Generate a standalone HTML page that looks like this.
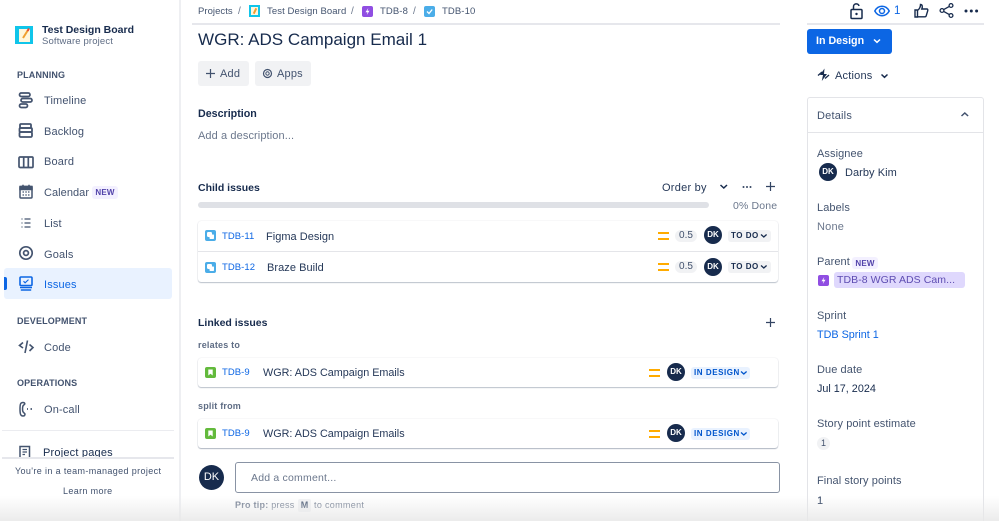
<!DOCTYPE html>
<html><head><meta charset="utf-8"><style>
html,body{margin:0;padding:0;background:#fff}
#p{position:relative;width:999px;height:521px;overflow:hidden;background:#fff;font-family:"Liberation Sans",sans-serif;color:#172B4D;font-size:11px}
.t{position:absolute;line-height:16px;white-space:nowrap}
.a{position:absolute}
.nav{color:#42526E;font-size:11px;letter-spacing:.15px}
.sec{color:#42526E;font-size:9px;font-weight:bold;letter-spacing:.15px}
.lnk{color:#0C66E4;font-size:9.5px;letter-spacing:.05px}
.dk{position:absolute;border-radius:50%;background:#172B4D;color:#fff;font-size:8px;font-weight:bold;text-align:center}
.row{position:absolute;left:198px;width:580px;background:#fff;border-radius:3px}
.ico{position:absolute;width:11px;height:11px;border-radius:2px}
.pri{position:absolute;width:11px;height:8px;border-top:2px solid #FFAB00;border-bottom:2px solid #FFAB00;box-sizing:border-box}
.st{position:absolute;height:12px;line-height:12px;border-radius:3px;font-size:8px;font-weight:bold;letter-spacing:.5px;padding-left:3px;box-sizing:border-box}
.lab{color:#44546F;font-size:11px;letter-spacing:.08px}
svg{position:absolute;overflow:visible}
</style></head><body><div id="p">

<!-- sidebar divider -->
<div class="a" style="left:179px;top:0;width:2px;height:521px;background:#EEEFF2"></div>

<!-- project logo -->
<div class="a" style="left:15px;top:26px;width:18px;height:18px;background:#10C5EA"></div>
<div class="a" style="left:19px;top:29px;width:11px;height:13px;background:#FFF6DC"></div>
<svg style="left:15px;top:26px" width="18" height="18"><path d="M8 12 L13 4" stroke="#F0A030" stroke-width="2"/><path d="M12.5 5 L14 2.5" stroke="#E5493A" stroke-width="2"/></svg>
<div class="t" style="left:42px;top:22px;font-size:10.5px;font-weight:bold;letter-spacing:0;">Test Design Board</div>
<div class="t" style="left:42px;top:34px;font-size:9.5px;color:#5E6C84;letter-spacing:.15px">Software project</div>

<div class="t sec" style="left:17px;top:67px">PLANNING</div>

<svg style="left:18px;top:92px" width="16" height="18" fill="none" stroke="#44546F" stroke-width="1.7"><rect x="1.5" y="1" width="10.5" height="3.5" rx="1.7"/><rect x="3" y="6.5" width="11" height="3.5" rx="1.7"/><rect x="1.5" y="12" width="8" height="3.5" rx="1.7"/></svg>
<div class="t nav" style="left:44px;top:93px">Timeline</div>

<svg style="left:18px;top:123px" width="16" height="16" fill="none" stroke="#44546F" stroke-width="1.8"><rect x="2" y="1" width="11" height="4" rx="1"/><rect x="1.5" y="5" width="12.5" height="4" rx="1"/><rect x="1.5" y="9" width="12.5" height="5" rx="1.2"/></svg>
<div class="t nav" style="left:44px;top:124px">Backlog</div>

<svg style="left:18px;top:155px" width="16" height="14" fill="none" stroke="#44546F" stroke-width="1.7"><rect x="1" y="2" width="14" height="10.5" rx="1"/><path d="M5.7 2v10.5M10.3 2v10.5"/></svg>
<div class="t nav" style="left:44px;top:154px">Board</div>

<svg style="left:18px;top:184px" width="16" height="16" fill="none" stroke="#44546F" stroke-width="1.5"><rect x="2" y="2.5" width="12" height="11.5" rx="1"/><rect x="2" y="2.5" width="12" height="3" fill="#44546F"/><path d="M5 .8v2M11 .8v2" /><path d="M4.5 8h1.5M7.3 8h1.5M10 8h1.5M4.5 11h1.5M7.3 11h1.5M10 11h1.5" stroke-width="1.2"/></svg>
<div class="t nav" style="left:44px;top:185px;letter-spacing:.05px">Calendar</div>
<div class="a" style="left:92px;top:186px;width:26px;height:13px;background:#F3F0FF;border-radius:3px;color:#5243AA;font-size:8px;font-weight:bold;line-height:13px;text-align:center;letter-spacing:.2px">NEW</div>

<svg style="left:20px;top:217px" width="12" height="12" fill="none" stroke="#44546F" stroke-width="1.3"><path d="M1.5 2h1M1.5 6h1M1.5 10h1M4.5 2h6M4.5 6h6M4.5 10h6"/></svg>
<div class="t nav" style="left:44px;top:216px">List</div>

<svg style="left:18px;top:245px" width="16" height="16" fill="none" stroke="#44546F"><circle cx="8" cy="8" r="6.2" stroke-width="1.7"/><circle cx="8" cy="8" r="2.4" stroke-width="1.7"/></svg>
<div class="t nav" style="left:44px;top:247px">Goals</div>

<div class="a" style="left:4px;top:268px;width:168px;height:31px;background:#E9F2FF;border-radius:3px"></div>
<div class="a" style="left:4px;top:277px;width:3px;height:13px;background:#0C66E4;border-radius:0 2px 2px 0"></div>
<svg style="left:18px;top:276px" width="16" height="16" fill="none" stroke="#0C66E4" stroke-width="1.6"><rect x="2" y="1" width="12" height="8.5" rx="1"/><path d="M5.5 5.2l1.6 1.6L10.5 3.6" stroke-width="1.1"/><path d="M2 11.5h12M2.8 14h10.4"/></svg>
<div class="t nav" style="left:44px;top:277px;color:#0C66E4">Issues</div>

<div class="t sec" style="left:17px;top:313px">DEVELOPMENT</div>
<svg style="left:18px;top:339px" width="16" height="16" fill="none" stroke="#44546F" stroke-width="1.6"><path d="M5 3.5L1.5 6.5 5 9M11.5 5.5L15 8.5 11.5 12M9.5 1.5L7 14"/></svg>
<div class="t nav" style="left:44px;top:340px">Code</div>

<div class="t sec" style="left:17px;top:375px">OPERATIONS</div>
<svg style="left:18px;top:400px" width="16" height="18" fill="none" stroke="#44546F" stroke-width="1.5"><path d="M5 2.500c-2.500 0-3 1.500-3 6.500s.5 7 3 7c1.500 0 2-.7 2-2l-2-2.200c-.6-1-.6-4.500 0-6L6.800 4C6.800 3 6 2.500 5 2.500z"/><path d="M9 9h1M12.500 9h1.500" stroke-width="1.700"/></svg>
<div class="t nav" style="left:44px;top:402px">On-call</div>

<div class="a" style="left:2px;top:430px;width:172px;height:1px;background:#EBECF0"></div>
<div class="t nav" style="left:43px;top:445px;color:#172B4D;letter-spacing:.2px">Project pages</div>
<div class="a" style="left:0;top:457px;width:179px;height:64px;background:#fff"></div>
<svg style="left:18px;top:445px" width="14" height="12" fill="none" stroke="#44546F" stroke-width="1.500" ><path d="M2 12V1.500h9.500V12"/><path d="M4.500 4.500h4.500M4.500 7h4.500M4.500 9.500h2.500" stroke-width="1.200"/></svg>
<div class="a" style="left:2px;top:457px;width:172px;height:2px;background:#E6E7EC"></div>
<div class="t" style="left:15px;top:463px;font-size:9px;color:#42526E;letter-spacing:.37px">You're in a team-managed project</div>
<div class="t" style="left:63px;top:483px;font-size:9px;color:#42526E;letter-spacing:.35px">Learn more</div>

<!-- breadcrumb -->
<div class="t" style="left:198px;top:4px;font-size:9.5px;color:#44546F;letter-spacing:.05px">Projects</div>
<div class="t" style="left:238px;top:4px;font-size:10px;color:#6B778C">/</div>
<div class="a" style="left:249px;top:5px;width:11px;height:12px;background:#10C5EA"></div>
<div class="a" style="left:251px;top:7px;width:7px;height:8px;background:#FFF6DC"></div>
<div class="a" style="left:254px;top:8px;width:2px;height:6px;background:#F0A030;transform:rotate(25deg)"></div>
<div class="t" style="left:267px;top:4px;font-size:9.5px;color:#44546F;letter-spacing:.1px">Test Design Board</div>
<div class="t" style="left:351px;top:4px;font-size:10px;color:#6B778C">/</div>
<div class="ico" style="left:362px;top:6px;background:#904EE2"></div>
<svg style="left:362px;top:6px" width="11" height="11"><path d="M6.300 2L3.500 6.200h2L4.800 9 7.500 4.800h-2z" fill="#fff"/></svg>
<div class="t" style="left:380px;top:4px;font-size:9.5px;color:#44546F;letter-spacing:.1px">TDB-8</div>
<div class="t" style="left:413px;top:4px;font-size:10px;color:#6B778C">/</div>
<div class="ico" style="left:424px;top:6px;background:#4BADE8"></div>
<svg style="left:424px;top:6px" width="11" height="11" fill="none" stroke="#fff" stroke-width="1.300"><path d="M3 5.500l2 2 3.200-4"/></svg>
<div class="t" style="left:442px;top:4px;font-size:9.5px;color:#44546F;letter-spacing:.1px">TDB-10</div>
<div class="a" style="left:192px;top:23px;width:588px;height:2px;background:#E6E7EC"></div>

<div class="t" style="left:198px;top:30px;font-size:17.05px;line-height:20px;">WGR: ADS Campaign Email 1</div>

<!-- buttons -->
<div class="a" style="left:198px;top:61px;width:51px;height:25px;background:#F1F2F4;border-radius:3px"></div>
<svg style="left:205px;top:68px" width="11" height="11" stroke="#42526E" stroke-width="1.200"><path d="M5.500 1v9M1 5.500h9"/></svg>
<div class="t" style="left:220px;top:66px;font-size:11px;color:#42526E;letter-spacing:.2px">Add</div>
<div class="a" style="left:255px;top:61px;width:56px;height:25px;background:#F1F2F4;border-radius:3px"></div>
<svg style="left:262px;top:68px" width="11" height="11" fill="none" stroke="#42526E"><circle cx="5.500" cy="5.500" r="4" stroke-width="1.200"/><circle cx="5.500" cy="5.500" r="1.700"/></svg>
<div class="t" style="left:277px;top:66px;font-size:11px;color:#42526E;letter-spacing:.2px">Apps</div>

<div class="t" style="left:198px;top:106px;font-size:10.7px;font-weight:bold">Description</div>
<div class="t" style="left:198px;top:128px;font-size:11px;color:#6B778C;letter-spacing:.1px">Add a description...</div>

<!-- child issues -->
<div class="t" style="left:198px;top:180px;font-size:10.5px;font-weight:bold">Child issues</div>
<div class="t" style="left:662px;top:180px;font-size:11px;letter-spacing:.25px;color:#253858">Order by</div>
<svg style="left:719px;top:183px" width="10" height="8" fill="none" stroke="#172B4D" stroke-width="1.500"><path d="M1.500 2l3.300 3L8 2"/></svg>
<svg style="left:742px;top:185px" width="11" height="4" fill="#344563"><circle cx="1.500" cy="2" r="1"/><circle cx="5" cy="2" r="1"/><circle cx="8.500" cy="2" r="1"/></svg>
<svg style="left:765px;top:181px" width="11" height="11" stroke="#344563" stroke-width="1.200"><path d="M5.500 1v9M1 5.500h9"/></svg>
<div class="a" style="left:198px;top:202px;width:511px;height:6px;background:#DFE1E6;border-radius:3px"></div>
<div class="t" style="left:733px;top:198px;font-size:10.500px;color:#6B778C;letter-spacing:.15px">0% Done</div>

<div class="row" style="top:221px;height:61px;box-shadow:0 1px 1px rgba(9,30,66,.25),0 0 1px rgba(9,30,66,.2)"></div>
<div class="a" style="left:198px;top:251px;width:580px;height:1px;background:#E4E5E9"></div>
<div class="ico" style="left:205px;top:230px;background:#4BADE8"></div>
<svg style="left:205px;top:230px" width="11" height="11" fill="#fff"><rect x="2.500" y="2.500" width="4" height="4" rx=".7" stroke="#fff"/><rect x="4.500" y="4.500" width="4.500" height="4.500" rx=".7"/></svg>
<div class="t lnk" style="left:222px;top:229px">TDB-11</div>
<div class="t" style="left:266px;top:229px;font-size:11px;color:#253858;letter-spacing:.02px">Figma Design</div>
<div class="ico" style="left:205px;top:262px;background:#4BADE8"></div>
<svg style="left:205px;top:262px" width="11" height="11" fill="#fff"><rect x="2.500" y="2.500" width="4" height="4" rx=".7" stroke="#fff"/><rect x="4.500" y="4.500" width="4.500" height="4.500" rx=".7"/></svg>
<div class="t lnk" style="left:222px;top:260px">TDB-12</div>
<div class="t" style="left:267px;top:260px;font-size:11px;color:#253858;letter-spacing:.05px">Braze Build</div>

<div class="pri" style="left:658px;top:232px"></div>
<div class="pri" style="left:658px;top:263px"></div>
<div class="a" style="left:675px;top:230px;width:22px;height:12px;border-radius:6px;background:#F1F2F4;color:#42526E;font-size:10px;line-height:12px;text-align:center">0.5</div>
<div class="a" style="left:675px;top:261px;width:22px;height:12px;border-radius:6px;background:#F1F2F4;color:#42526E;font-size:10px;line-height:12px;text-align:center">0.5</div>
<div class="dk" style="left:704px;top:226px;width:18px;height:18px;line-height:18px">DK</div>
<div class="dk" style="left:704px;top:258px;width:18px;height:18px;line-height:18px">DK</div>
<div class="st" style="left:728px;top:230px;width:43px;background:#F1F2F4;color:#172B4D">TO DO</div>
<div class="st" style="left:728px;top:261px;width:43px;background:#F1F2F4;color:#172B4D">TO DO</div>
<svg style="left:760px;top:233px" width="9" height="7" fill="none" stroke="#172B4D" stroke-width="1.300"><path d="M1 1.500l2.800 2.500 2.800-2.500"/></svg>
<svg style="left:760px;top:264px" width="9" height="7" fill="none" stroke="#172B4D" stroke-width="1.300"><path d="M1 1.500l2.800 2.500 2.800-2.500"/></svg>

<!-- linked -->
<div class="t" style="left:198px;top:315px;font-size:10.5px;font-weight:bold">Linked issues</div>
<svg style="left:765px;top:317px" width="11" height="11" stroke="#344563" stroke-width="1.200"><path d="M5.500 1v9M1 5.500h9"/></svg>
<div class="t" style="left:198px;top:337px;font-size:9px;font-weight:bold;color:#5E6C84;letter-spacing:.2px">relates to</div>
<div class="row" style="top:358px;height:29px;box-shadow:0 1px 1px rgba(9,30,66,.25),0 0 1px rgba(9,30,66,.2)"></div>
<div class="ico" style="left:205px;top:367px;background:#63BA3C"></div>
<svg style="left:205px;top:367px" width="11" height="11"><path d="M3.300 2.500h4.400v6L5.500 6.800 3.300 8.500z" fill="#fff"/></svg>
<div class="t lnk" style="left:222px;top:365px">TDB-9</div>
<div class="t" style="left:263px;top:365px;font-size:10.8px;color:#253858">WGR: ADS Campaign Emails</div>
<div class="pri" style="left:649px;top:369px"></div>
<div class="dk" style="left:667px;top:363px;width:18px;height:18px;line-height:18px">DK</div>
<div class="st" style="left:691px;top:367px;width:59px;background:#E9F2FF;color:#0055CC;letter-spacing:.55px">IN DESIGN</div>
<svg style="left:740px;top:370px" width="9" height="7" fill="none" stroke="#0055CC" stroke-width="1.300"><path d="M1 1.500l2.800 2.500 2.800-2.500"/></svg>

<div class="t" style="left:198px;top:398px;font-size:9px;font-weight:bold;color:#5E6C84;letter-spacing:.2px">split from</div>
<div class="row" style="top:419px;height:29px;box-shadow:0 1px 1px rgba(9,30,66,.3),0 0 1px rgba(9,30,66,.2)"></div>
<div class="ico" style="left:205px;top:428px;background:#63BA3C"></div>
<svg style="left:205px;top:428px" width="11" height="11"><path d="M3.300 2.500h4.400v6L5.500 6.800 3.300 8.500z" fill="#fff"/></svg>
<div class="t lnk" style="left:222px;top:426px">TDB-9</div>
<div class="t" style="left:263px;top:426px;font-size:10.8px;color:#253858">WGR: ADS Campaign Emails</div>
<div class="pri" style="left:649px;top:430px"></div>
<div class="dk" style="left:667px;top:424px;width:18px;height:18px;line-height:18px">DK</div>
<div class="st" style="left:691px;top:428px;width:59px;background:#E9F2FF;color:#0055CC;letter-spacing:.55px">IN DESIGN</div>
<svg style="left:740px;top:431px" width="9" height="7" fill="none" stroke="#0055CC" stroke-width="1.300"><path d="M1 1.500l2.800 2.500 2.800-2.500"/></svg>

<!-- comment -->
<div class="dk" style="left:199px;top:465px;width:25px;height:25px;line-height:25px;font-size:11px;font-weight:normal">DK</div>
<div class="a" style="left:235px;top:462px;width:545px;height:31px;box-sizing:border-box;border:1px solid #8993A4;border-radius:3px;background:#fff"></div>
<div class="t" style="left:251px;top:470px;font-size:10.500px;color:#6B778C;letter-spacing:.2px">Add a comment...</div>
<div class="t" style="left:235px;top:497px;font-size:9px;color:#6B778C;letter-spacing:.25px"><b>Pro tip:</b> press</div>
<div class="a" style="left:298px;top:499px;width:13px;height:13px;border-radius:2px;background:#F1F2F4;color:#42526E;font-size:9px;font-weight:bold;line-height:13px;text-align:center">M</div>
<div class="t" style="left:314px;top:497px;font-size:9px;color:#6B778C;letter-spacing:.32px">to comment</div>

<!-- right top -->
<svg style="left:850px;top:3px" width="14" height="16" fill="none" stroke="#172B4D" stroke-width="1.500"><rect x="1" y="6.500" width="11" height="9" rx="1"/><path d="M3.500 6.500V4a2.800 2.800 0 0 1 5.500-1"/><circle cx="6.500" cy="11" r="1.200" fill="#172B4D" stroke="none"/></svg>
<svg style="left:874px;top:3px" width="16" height="16" fill="none" stroke="#0C66E4" stroke-width="1.500"><path d="M.8 8C2.500 4.800 5 3.300 8 3.300S13.500 4.800 15.200 8C13.500 11.200 11 12.700 8 12.700S2.500 11.200.8 8z"/><circle cx="8" cy="8" r="2.500"/></svg>
<div class="t" style="left:894px;top:3px;font-size:11.5px;color:#0C66E4">1</div>
<svg style="left:914px;top:3px" width="15" height="15" fill="none" stroke="#172B4D" stroke-width="1.400"><path d="M1 7h2.500v7H1zM3.500 7.500C5.500 6 6.500 4 6.500 1.500c1.800 0 2.300 2 1.300 4.500H13c.8 0 1 1 .7 1.800l-1.500 5c-.2.700-.6 1-1.300 1H3.500"/></svg>
<svg style="left:939px;top:3px" width="15" height="15" fill="none" stroke="#172B4D" stroke-width="1.300"><circle cx="3" cy="7.500" r="1.900"/><circle cx="12" cy="2.500" r="1.900"/><circle cx="12" cy="12.500" r="1.900"/><path d="M4.700 6.600L10.300 3.400M4.700 8.400l5.600 3.200"/></svg>
<svg style="left:964px;top:8px" width="15" height="6" fill="#172B4D"><circle cx="2" cy="3" r="1.500"/><circle cx="7.300" cy="3" r="1.500"/><circle cx="12.600" cy="3" r="1.500"/></svg>
<div class="a" style="left:807px;top:23px;width:177px;height:2px;background:#E6E7EC"></div>

<div class="a" style="left:807px;top:29px;width:85px;height:25px;background:#0C66E4;border-radius:3px"></div>
<div class="t" style="left:816px;top:33px;font-size:10.7px;font-weight:bold;color:#fff">In Design</div>
<svg style="left:873px;top:38px" width="8" height="6" fill="none" stroke="#fff" stroke-width="1.500"><path d="M1 1.500l3 2.800 3-2.800"/></svg>

<svg style="left:817px;top:67px" width="13" height="16" fill="#172B4D"><path d="M7.500 1.500L3 8h3L4.800 14l5.200-7H7z"/><path d="M1 8.500L5 5M8 11.500L12 8" stroke="#172B4D" stroke-width="1.300"/></svg>
<div class="t" style="left:835px;top:68px;font-size:11px;color:#253858;letter-spacing:.2px">Actions</div>
<svg style="left:880px;top:73px" width="10" height="8" fill="none" stroke="#172B4D" stroke-width="1.500"><path d="M1.500 1.500l3 2.800 3-2.800"/></svg>

<!-- details box -->
<div class="a" style="left:807px;top:97px;width:177px;height:440px;box-sizing:border-box;border:1px solid #E3E4E8;border-radius:3px;background:#fff"></div>
<div class="a" style="left:807px;top:132px;width:177px;height:1px;background:#E3E4E8"></div>
<div class="t" style="left:817px;top:108px;font-size:11px;color:#42526E;letter-spacing:.2px">Details</div>
<svg style="left:960px;top:111px" width="10" height="8" fill="none" stroke="#42526E" stroke-width="1.500"><path d="M1.500 5l3.300-3 3.300 3"/></svg>

<div class="t lab" style="left:817px;top:146px">Assignee</div>
<div class="dk" style="left:819px;top:163px;width:18px;height:18px;line-height:18px">DK</div>
<div class="t" style="left:845px;top:165px;font-size:11px;color:#253858;letter-spacing:.05px">Darby Kim</div>
<div class="t lab" style="left:817px;top:200px">Labels</div>
<div class="t" style="left:817px;top:219px;font-size:11px;color:#6B778C;letter-spacing:.2px">None</div>
<div class="t lab" style="left:817px;top:254px">Parent</div>
<div class="a" style="left:852px;top:257px;width:26px;height:12px;background:#F3F0FF;border-radius:3px;color:#5243AA;font-size:8px;font-weight:bold;line-height:13px;text-align:center;letter-spacing:.2px">NEW</div>
<div class="ico" style="left:818px;top:275px;background:#904EE2"></div>
<svg style="left:818px;top:275px" width="11" height="11"><path d="M6.300 2L3.500 6.200h2L4.800 9 7.500 4.800h-2z" fill="#fff"/></svg>
<div class="a" style="left:834px;top:272px;width:131px;height:16px;background:#DFD8FD;border-radius:3px"></div>
<div class="t" style="left:837px;top:272px;font-size:10.500px;color:#5E4DB2;letter-spacing:.07px">TDB-8 WGR ADS Cam...</div>
<div class="t lab" style="left:817px;top:308px">Sprint</div>
<div class="t" style="left:817px;top:327px;font-size:10.8px;color:#0C66E4">TDB Sprint 1</div>
<div class="t lab" style="left:817px;top:362px">Due date</div>
<div class="t" style="left:817px;top:381px;font-size:10.8px;color:#172B4D">Jul 17, 2024</div>
<div class="t lab" style="left:817px;top:416px">Story point estimate</div>
<div class="a" style="left:817px;top:437px;width:13px;height:13px;border-radius:50%;background:#F1F2F4;color:#42526E;font-size:9px;line-height:13px;text-align:center">1</div>
<div class="t lab" style="left:817px;top:473px">Final story points</div>
<div class="t" style="left:817px;top:493px;font-size:11px;color:#172B4D">1</div>

<!-- bottom fade -->
<div class="a" style="left:0;top:496px;width:999px;height:25px;background:linear-gradient(to bottom,rgba(235,235,235,0),rgba(232,232,232,.85));pointer-events:none"></div>
</div></body></html>
